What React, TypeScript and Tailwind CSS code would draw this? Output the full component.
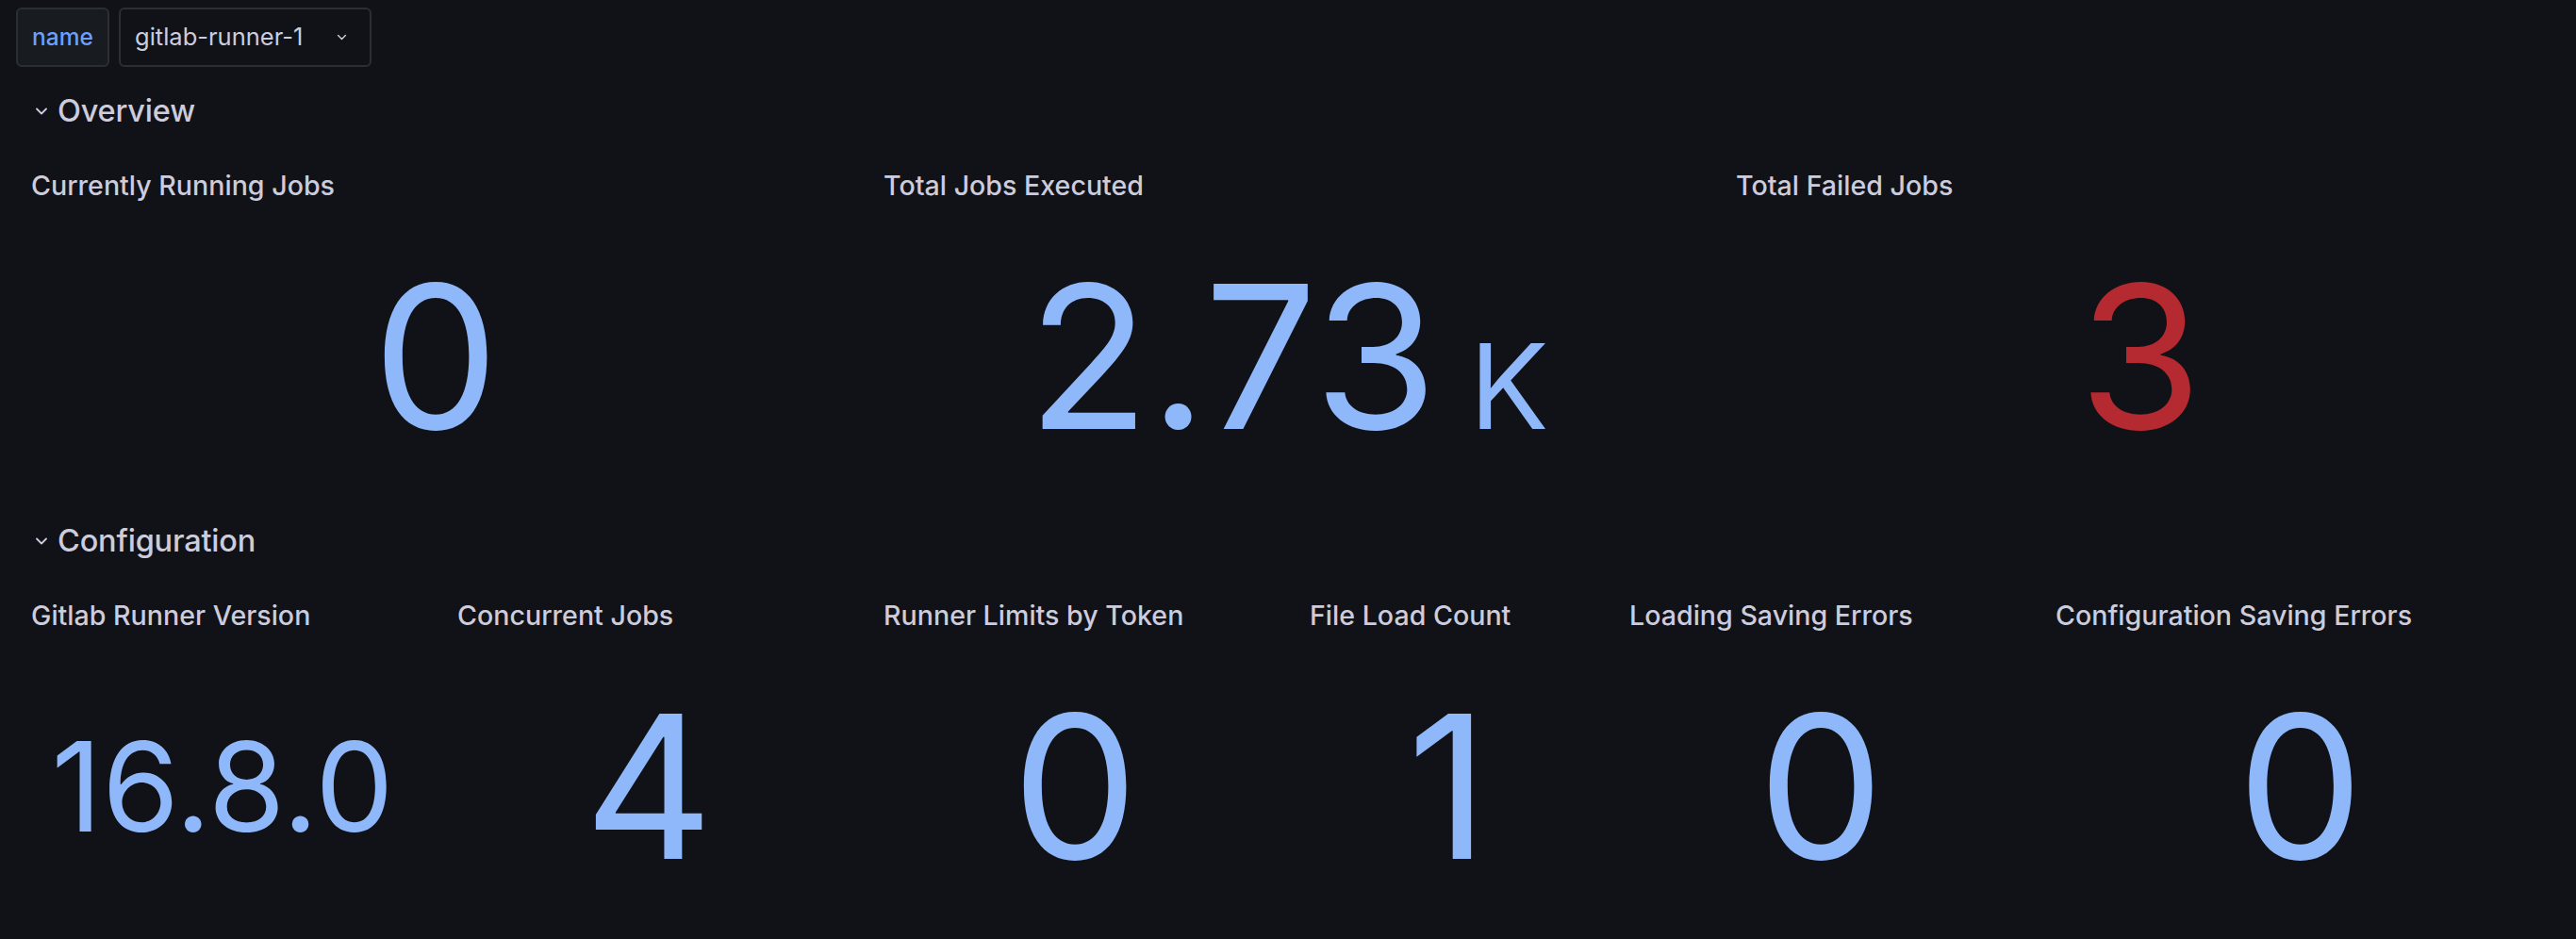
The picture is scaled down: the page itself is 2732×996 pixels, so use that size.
import React from 'react';

type Stat = {
  title: string;
  value: string;
  suffix?: string;
  span: string;
  size: string;
  color?: string;
};

const overview: Stat[] = [
  { title: 'Currently Running Jobs', value: '0', span: 'col-span-8', size: 'text-[212px]' },
  { title: 'Total Jobs Executed', value: '2.73', suffix: 'K', span: 'col-span-8', size: 'text-[212px]' },
  { title: 'Total Failed Jobs', value: '3', span: 'col-span-8', size: 'text-[212px]', color: 'text-[#b42a30]' },
];

const configuration: Stat[] = [
  { title: 'Gitlab Runner Version', value: '16.8.0', span: 'col-span-4', size: 'text-[132px]' },
  { title: 'Concurrent Jobs', value: '4', span: 'col-span-4', size: 'text-[212px]' },
  { title: 'Runner Limits by Token', value: '0', span: 'col-span-4', size: 'text-[212px]' },
  { title: 'File Load Count', value: '1', span: 'col-span-3', size: 'text-[212px]' },
  { title: 'Loading Saving Errors', value: '0', span: 'col-span-4', size: 'text-[212px]' },
  { title: 'Configuration Saving Errors', value: '0', span: 'col-span-5', size: 'text-[212px]' },
];

function Chevron({ className }: { className?: string }) {
  return (
    <svg viewBox="0 0 14 8" className={className} fill="none">
      <polyline points="2,1.5 7,6.5 12,1.5" stroke="currentColor" strokeWidth="1.8" strokeLinecap="round" strokeLinejoin="round" />
    </svg>
  );
}

function RowHeader({ title }: { title: string }) {
  return (
    <div className="h-[52px] flex items-center text-[#ccccdc]">
      <Chevron className="w-[14px] h-[8px] ml-[20px] mr-[10px]" />
      <span className="text-[32.5px] font-medium tracking-[-0.2px]">{title}</span>
    </div>
  );
}

function StatPanel({ stat }: { stat: Stat }) {
  return (
    <div className={`${stat.span} flex flex-col h-full min-w-0`}>
      <div className="h-[56px] flex items-center px-[16px]">
        <h2 className="text-[28.6px] font-medium text-[#ccccdc] whitespace-nowrap">{stat.title}</h2>
      </div>
      <div className="flex-1 flex items-center justify-center">
        <div className={`flex items-baseline leading-none font-normal ${stat.color ?? 'text-[#8fb8fb]'}`}>
          <span className={stat.size}>{stat.value}</span>
          {stat.suffix && <span className="text-[125px] ml-[34px]">{stat.suffix}</span>}
        </div>
      </div>
    </div>
  );
}

export default function App() {
  return (
    <div className="min-h-screen bg-[#111217] px-[17px] font-['Inter',sans-serif] overflow-hidden">
      <div className="pt-[8px] flex gap-[10px]">
        <div className="w-[99px] h-[63px] flex items-center justify-center rounded-[6px] border-2 border-[#2b2e34] bg-[#181b1f] text-[24.5px] font-medium text-[#6e9fff]">
          name
        </div>
        <div className="w-[268px] h-[63px] flex items-center rounded-[6px] border-2 border-[#2b2e34] pl-[15px] pr-[24px] text-[25.5px] text-[#ccccdc]">
          <span className="flex-1">gitlab-runner-1</span>
          <Chevron className="w-[11px] h-[7px]" />
        </div>
      </div>

      <div className="mt-[21px]">
        <RowHeader title="Overview" />
      </div>
      <div className="mt-[25px] h-[361px] grid grid-cols-24 gap-x-[14px]">
        {overview.map((s) => (
          <StatPanel key={s.title} stat={s} />
        ))}
      </div>

      <div className="mt-[18px]">
        <RowHeader title="Configuration" />
      </div>
      <div className="mt-[25px] h-[361px] grid grid-cols-24 gap-x-[14px]">
        {configuration.map((s) => (
          <StatPanel key={s.title} stat={s} />
        ))}
      </div>
    </div>
  );
}
